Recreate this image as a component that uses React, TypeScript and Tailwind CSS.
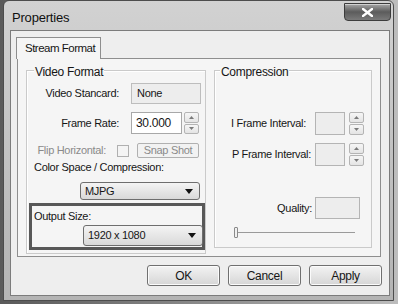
function Spinner({ h }: { h: string }) {
  return (
    <div className={`flex w-[15px] flex-col gap-[1px] ${h}`}>
      <div className="flex flex-1 items-center justify-center rounded-[2px] border border-[#b4b4b4] bg-gradient-to-b from-[#f6f6f6] to-[#e4e4e4]">
        <svg width="5" height="3" viewBox="0 0 5 3"><path d="M0 3L2.5 0L5 3Z" fill="#7a7a7a" /></svg>
      </div>
      <div className="flex flex-1 items-center justify-center rounded-[2px] border border-[#b4b4b4] bg-gradient-to-b from-[#f6f6f6] to-[#e4e4e4]">
        <svg width="5" height="3" viewBox="0 0 5 3"><path d="M0 0L2.5 3L5 0Z" fill="#7a7a7a" /></svg>
      </div>
    </div>
  )
}

function Dropdown({ value, h }: { value: string; h: string }) {
  return (
    <div className={`ml-[53px] flex w-[120px] items-center justify-between rounded-[3px] border border-[#6e6e6e] bg-gradient-to-b from-[#f4f4f4] to-[#d9d9d9] pl-[4px] pr-[6px] ${h}`}>
      <span>{value}</span>
      <svg width="8" height="5" viewBox="0 0 8 5"><path d="M0 0H8L4 5Z" fill="#111" /></svg>
    </div>
  )
}

function Button({ label }: { label: string }) {
  return (
    <div className="flex h-[21px] w-[73px] items-center justify-center rounded-[3px] border border-[#707070] bg-gradient-to-b from-[#f3f3f3] to-[#d6d6d6] shadow-[inset_0_0_0_1px_#fbfbfb] text-[12px]">
      {label}
    </div>
  )
}

export default function App() {
  return (
    <div className="h-[304px] w-[398px] overflow-hidden bg-gradient-to-r from-[#5a5a5a] via-[#8a8a8a] to-[#bdbdbd] pl-[3px] font-['Liberation_Sans',Arial,sans-serif] text-[11px] tracking-[-0.3px] text-[#161616]">
      <div className="flex h-[301px] w-[391px] flex-col rounded-t-[6px] border border-[#4d4d4d] bg-gradient-to-b from-[#d2d2d2] via-[#c2c2c2] to-[#b4b4b4]">
        <div className="flex h-[29px] items-start justify-between">
          <span className="pl-[8px] pt-[7px] text-[13px] tracking-[-0.2px] text-[#111]">Properties</span>
          <div className="mr-[2px] mt-[2px] flex h-[18px] w-[47px] items-center justify-center rounded-b-[4px] border border-[#3c3c3c] bg-gradient-to-b from-[#a8a8a8] via-[#5c5c5c] to-[#7a7a7a] shadow-[inset_0_1px_0_#d0d0d0]">
            <svg width="11" height="9" viewBox="0 0 11 9">
              <path d="M1 1L10 8M10 1L1 8" stroke="#fff" strokeWidth="2.4" strokeLinecap="square" />
            </svg>
          </div>
        </div>
        <div className="ml-[6px] flex h-[266px] w-[380px] flex-col border border-[#7c7c7c] bg-[#eeeeee] pt-[6px]">
          <div className="relative z-10 -mb-px ml-[5px] flex h-[22px] w-[85px] items-center whitespace-nowrap border border-b-0 border-[#8e8e8e] bg-[#f5f5f5] pl-[8px] text-[11.5px] tracking-[-0.5px]">
            Stream Format
          </div>
          <div className="ml-[6px] flex h-[199px] w-[364px] gap-[8px] border border-[#8e8e8e] bg-[#f5f5f5] pl-[8px] pt-[11px]">
            <div className="relative flex h-[184px] w-[180px] flex-col border border-[#cacaca] shadow-[inset_1px_1px_0_#fff]">
              <span className="absolute -top-[8px] left-[7px] bg-[#f5f5f5] px-[1px] text-[12px]">Video Format</span>
              <div className="mt-[12px] flex h-[21px] items-center">
                <span className="w-[92px] text-right">Video Stancard:</span>
                <div className="ml-[12px] flex h-[21px] w-[70px] items-center border border-[#bdbdbd] bg-[#ededed] pl-[5px]">None</div>
              </div>
              <div className="mt-[8px] flex h-[22px] items-center">
                <span className="w-[92px] text-right">Frame Rate:</span>
                <div className="ml-[12px] flex h-[22px] w-[51px] items-center border border-[#a8a8a8] bg-white pl-[4px] text-[12px]">30.000</div>
                <div className="ml-[2px]"><Spinner h="h-[22px]" /></div>
              </div>
              <div className="mt-[9px] flex h-[15px] items-center text-[#8a8a8a]">
                <span className="w-[79px] text-right">Flip Horizontal:</span>
                <div className="ml-[11px] h-[12px] w-[12px] border border-[#b0b0b0] bg-[#f4f4f4]" />
                <div className="ml-[8px] flex h-[15px] w-[62px] items-center justify-center rounded-[2px] border border-[#b0b0b0] bg-[#f2f2f2]">Snap Shot</div>
              </div>
              <span className="ml-[7px] mt-[3px] leading-[13px]">Color Space / Compression:</span>
              <div className="mt-[8px]"><Dropdown value="MJPG" h="h-[18px]" /></div>
              <div className="ml-[2px] mt-[3px] flex h-[47px] w-[176px] flex-col border-[3px] border-[#585858]">
                <span className="ml-[2px] mt-[4px] leading-[13px]">Output Size:</span>
                <div className="mt-[2px] -ml-[2px]"><Dropdown value="1920 x 1080" h="h-[21px]" /></div>
              </div>
            </div>
            <div className="relative flex h-[178px] w-[158px] flex-col items-end border border-[#cacaca] pr-[7px] shadow-[inset_1px_1px_0_#fff]">
              <span className="absolute -top-[8px] left-[5px] bg-[#f5f5f5] px-[1px] text-[12px]">Compression</span>
              <div className="mt-[41px] flex h-[23px] items-center">
                <span>I Frame Interval:</span>
                <div className="ml-[9px] h-[23px] w-[30px] border border-[#b4b4b4] bg-[#ededed]" />
                <div className="ml-[4px]"><Spinner h="h-[23px]" /></div>
              </div>
              <div className="mt-[8px] flex h-[23px] items-center">
                <span>P Frame Interval:</span>
                <div className="ml-[4px] h-[23px] w-[30px] border border-[#b4b4b4] bg-[#ededed]" />
                <div className="ml-[4px]"><Spinner h="h-[23px]" /></div>
              </div>
              <div className="mt-[31px] mr-[4px] flex h-[22px] items-center">
                <span>Quality:</span>
                <div className="ml-[3px] h-[22px] w-[45px] border border-[#b4b4b4] bg-[#ededed]" />
              </div>
              <div className="ml-[19px] mr-[8px] mt-[8px] flex h-[11px] w-[121px] items-center self-start">
                <div className="h-[11px] w-[4px] rounded-[1px] border border-[#8a8a8a] bg-[#f0f0f0]" />
                <div className="h-[2px] flex-1 border-t border-[#9a9a9a] border-b-white" />
              </div>
            </div>
          </div>
          <div className="mt-[8px] flex justify-end gap-[8px] pr-[7px]">
            <Button label="OK" />
            <Button label="Cancel" />
            <Button label="Apply" />
          </div>
        </div>
      </div>
    </div>
  )
}
